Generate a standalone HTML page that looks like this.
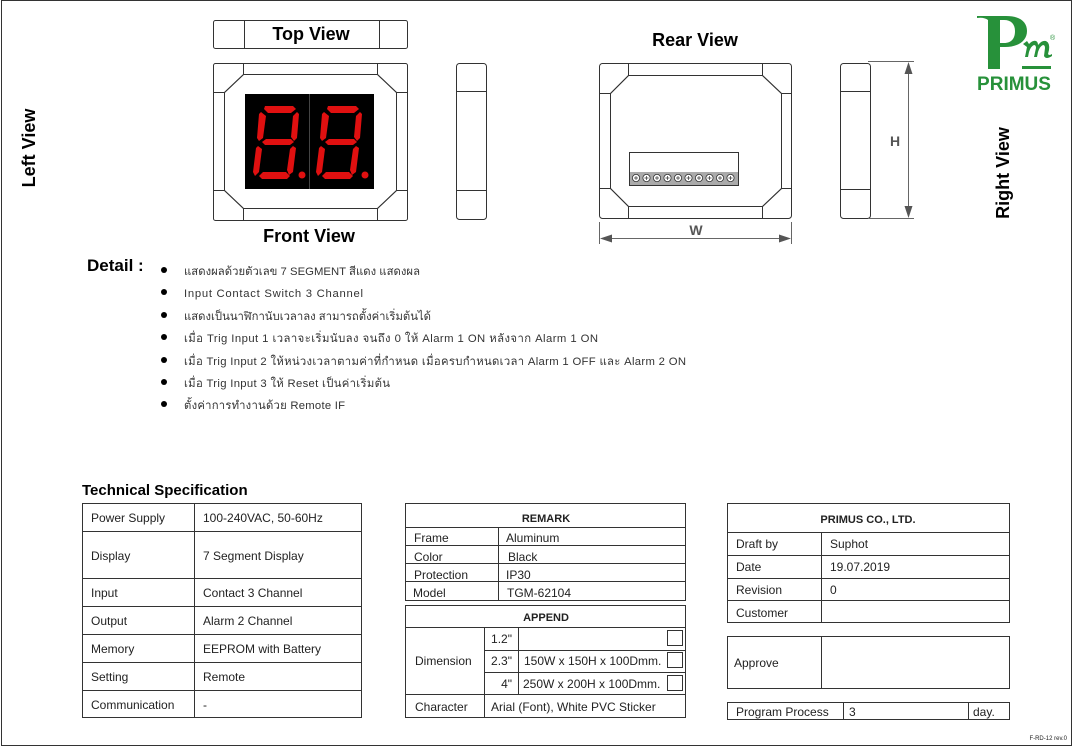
<!DOCTYPE html>
<html><head><meta charset="utf-8"><style>
html,body{margin:0;padding:0;background:#fff;}
svg{display:block;font-family:"Liberation Sans","DejaVu Sans",sans-serif;}
.t{font-size:12px;fill:#222;}
.th{font-family:"Liberation Sans","DejaVu Sans","Noto Sans CJK SC",sans-serif;font-size:11.3px;fill:#333;}
.b{font-weight:bold;fill:#000;}
</style></head><body>
<svg width="1074" height="753" viewBox="0 0 1074 753" xmlns="http://www.w3.org/2000/svg">
<rect x="1.5" y="0.5" width="1070" height="745" fill="none" stroke="#333" stroke-width="1"/>
<g fill="none" stroke="#333" stroke-width="1">
<rect x="213.5" y="20.5" width="194" height="28" rx="2"/>
<line x1="244.5" y1="20" x2="244.5" y2="48"/><line x1="379.5" y1="20" x2="379.5" y2="48"/>
<rect x="213.5" y="63.5" width="194" height="157" rx="2"/>
<polygon points="243.5,74.5 377.5,74.5 396.5,92.5 396.5,190.5 377.5,208.5 243.5,208.5 224.5,190.5 224.5,92.5"/>
<polyline points="243.5,63 243.5,74.5 224.5,92.5 213,92.5"/>
<polyline points="377.5,63 377.5,74.5 396.5,92.5 407,92.5"/>
<polyline points="243.5,220 243.5,208.5 224.5,190.5 213,190.5"/>
<polyline points="377.5,220 377.5,208.5 396.5,190.5 407,190.5"/>
<rect x="456.5" y="63.5" width="30" height="156" rx="3"/>
<line x1="456" y1="91.5" x2="487" y2="91.5"/><line x1="456" y1="190.5" x2="487" y2="190.5"/>
<rect x="599.5" y="63.5" width="192" height="155" rx="3"/>
<polygon points="628.5,75.5 762.5,75.5 781.5,93.5 781.5,188.5 762.5,206.5 628.5,206.5 610.5,188.5 610.5,93.5"/>
<polyline points="628.5,63 628.5,75.5 610.5,93.5 599,93.5"/>
<polyline points="762.5,63 762.5,75.5 781.5,93.5 792,93.5"/>
<polyline points="628.5,219 628.5,206.5 610.5,188.5 599,188.5"/>
<polyline points="762.5,219 762.5,206.5 781.5,188.5 792,188.5"/>
<rect x="629.5" y="152.5" width="109" height="33"/>
<rect x="840.5" y="63.5" width="30" height="155" rx="3"/>
<line x1="840" y1="91.5" x2="871" y2="91.5"/><line x1="840" y1="189.5" x2="871" y2="189.5"/>
</g>
<rect x="630" y="172" width="108" height="13" fill="#aaa"/>
<g fill="#fff" stroke="#333" stroke-width="0.8">
<circle cx="636" cy="178" r="3.6"/><circle cx="646.5" cy="178" r="3.6"/><circle cx="657" cy="178" r="3.6"/><circle cx="667.5" cy="178" r="3.6"/><circle cx="678" cy="178" r="3.6"/><circle cx="688.5" cy="178" r="3.6"/><circle cx="699" cy="178" r="3.6"/><circle cx="709.5" cy="178" r="3.6"/><circle cx="720" cy="178" r="3.6"/><circle cx="730.5" cy="178" r="3.6"/>
</g>
<g stroke="#333" stroke-width="0.7">
<path d="M634,178h4M636,176v4M644.5,178h4M646.5,176v4M655,178h4M657,176v4M665.5,178h4M667.5,176v4M676,178h4M678,176v4M686.5,178h4M688.5,176v4M697,178h4M699,176v4M707.5,178h4M709.5,176v4M718,178h4M720,176v4M728.5,178h4M730.5,176v4"/>
</g>
<g stroke="#666" stroke-width="1" fill="#555">
<line x1="599.5" y1="222" x2="599.5" y2="244"/><line x1="791.5" y1="222" x2="791.5" y2="244"/>
<line x1="602" y1="238.5" x2="789" y2="238.5"/>
<polygon points="600,238.5 612,234.5 612,242.5" stroke="none"/><polygon points="791,238.5 779,234.5 779,242.5" stroke="none"/>
<line x1="868" y1="61.5" x2="914" y2="61.5"/><line x1="868" y1="218.5" x2="914" y2="218.5"/>
<line x1="908.5" y1="64" x2="908.5" y2="216"/>
<polygon points="908.5,62 904.5,74 912.5,74" stroke="none"/><polygon points="908.5,218 904.5,206 912.5,206" stroke="none"/>
</g>
<text x="696" y="235" font-size="14" font-weight="bold" fill="#555" text-anchor="middle">W</text>
<text x="895" y="146" font-size="14" font-weight="bold" fill="#555" text-anchor="middle">H</text>
<rect x="245" y="94" width="129" height="95" fill="#000"/>
<line x1="309.5" y1="94" x2="309.5" y2="189" stroke="#444"/>
<g fill="#e01010">
<g id="d1">
<polygon points="265,106 293,106 296,109 291,113 268,113 264,109"/>
<polygon points="261,112 266,116 263,138 259,141 257,138 259,114"/>
<polygon points="297,112 299,114 297,138 294,141 291,137 293,116"/>
<polygon points="262,142 266,139 291,139 294,142 290,145 265,145"/>
<polygon points="258,146 262,149 259,172 255,176 253,172 256,148"/>
<polygon points="293,146 296,148 293,172 289,175 287,170 290,149"/>
<polygon points="259,176 263,172 286,172 290,176 287,179 262,179"/>
<circle cx="302" cy="175" r="3.5"/>
</g>
<use href="#d1" x="63"/>
</g>
<text x="311" y="40" font-size="18" class="b" text-anchor="middle">Top View</text>
<text x="309" y="242" font-size="18" class="b" text-anchor="middle">Front View</text>
<text x="695" y="46" font-size="18" class="b" text-anchor="middle">Rear View</text>
<text transform="translate(35,148) rotate(-90)" font-size="18" class="b" text-anchor="middle">Left View</text>
<text transform="translate(1009,173) rotate(-90)" font-size="18" class="b" text-anchor="middle">Right View</text>
<!-- logo -->
<g fill="#27913a">
<path d="M977,16 H1006 C1020,16 1027,22 1027,31 C1027,41 1018,47 1005,47 H1000 V69 H988 V20 Q984,17 977,18 Z M1000,20 V43 H1004 C1012,43 1015,38 1015,31 C1015,24 1011,20 1004,20 Z"/>
<path d="M1023,44 L1027,41 L1029,44 Q1033,40 1036,41 Q1038,42 1038,45 Q1042,40 1046,41 Q1050,43 1049,50 L1048,54 Q1049,56 1052,54 L1052,56 Q1046,60 1044,56 L1045,48 Q1045,45 1043,45 Q1040,46 1038,52 L1037,57 L1034,57 L1036,48 Q1036,45 1034,45 Q1031,46 1029,52 L1028,57 L1025,57 L1027,47 Z"/>
<rect x="1022" y="66" width="29" height="3"/>
<text x="1050" y="40" font-size="7" fill="#27913a">®</text>
<text x="1014" y="90" font-size="19" font-weight="bold" fill="#27913a" text-anchor="middle">PRIMUS</text>
</g>
<text x="87" y="271" font-size="17" class="b">Detail :</text>
<g fill="#000"><circle cx="164" cy="270" r="3"/><circle cx="164" cy="292" r="3"/><circle cx="164" cy="315" r="3"/><circle cx="164" cy="337" r="3"/><circle cx="164" cy="360" r="3"/><circle cx="164" cy="382" r="3"/><circle cx="164" cy="404" r="3"/></g>
<g class="th">
<text x="184" y="275" textLength="236">แสดงผลด้วยตัวเลข 7 SEGMENT สีแดง แสดงผล</text>
<text x="184" y="297" textLength="179">Input Contact Switch 3 Channel</text>
<text x="184" y="320" textLength="247">แสดงเป็นนาฬิกานับเวลาลง สามารถตั้งค่าเริ่มต้นได้</text>
<text x="184" y="342" textLength="414">เมื่อ Trig Input 1 เวลาจะเริ่มนับลง จนถึง 0 ให้ Alarm 1 ON หลังจาก Alarm 1 ON</text>
<text x="184" y="365" textLength="502">เมื่อ Trig Input 2 ให้หน่วงเวลาตามค่าที่กำหนด เมื่อครบกำหนดเวลา Alarm 1 OFF และ Alarm 2 ON</text>
<text x="184" y="387" textLength="206">เมื่อ Trig Input 3 ให้ Reset เป็นค่าเริ่มต้น</text>
<text x="184" y="409" textLength="161">ตั้งค่าการทำงานด้วย Remote IF</text>
</g>
<text x="82" y="495" font-size="15" class="b">Technical Specification</text>
<g fill="none" stroke="#333" stroke-width="1">
<rect x="82.5" y="503.5" width="279" height="214"/>
<line x1="194.5" y1="503" x2="194.5" y2="718"/>
<line x1="82" y1="531.5" x2="362" y2="531.5"/><line x1="82" y1="578.5" x2="362" y2="578.5"/><line x1="82" y1="606.5" x2="362" y2="606.5"/><line x1="82" y1="634.5" x2="362" y2="634.5"/><line x1="82" y1="662.5" x2="362" y2="662.5"/><line x1="82" y1="690.5" x2="362" y2="690.5"/>
<rect x="405.5" y="503.5" width="280" height="97"/>
<line x1="405" y1="527.5" x2="686" y2="527.5"/><line x1="405" y1="545.5" x2="686" y2="545.5"/><line x1="405" y1="563.5" x2="686" y2="563.5"/><line x1="405" y1="581.5" x2="686" y2="581.5"/>
<line x1="498.5" y1="527" x2="498.5" y2="600"/>
<rect x="405.5" y="605.5" width="280" height="112"/>
<line x1="405" y1="627.5" x2="686" y2="627.5"/><line x1="484" y1="650.5" x2="686" y2="650.5"/><line x1="484" y1="672.5" x2="686" y2="672.5"/><line x1="405" y1="694.5" x2="686" y2="694.5"/>
<line x1="484.5" y1="627" x2="484.5" y2="718"/><line x1="518.5" y1="627" x2="518.5" y2="694"/>
<rect x="667.5" y="630.5" width="15" height="15"/><rect x="667.5" y="652.5" width="15" height="15"/><rect x="667.5" y="675.5" width="15" height="15"/>
<rect x="727.5" y="503.5" width="282" height="119"/>
<line x1="727" y1="532.5" x2="1010" y2="532.5"/><line x1="727" y1="555.5" x2="1010" y2="555.5"/><line x1="727" y1="578.5" x2="1010" y2="578.5"/><line x1="727" y1="600.5" x2="1010" y2="600.5"/>
<line x1="821.5" y1="532" x2="821.5" y2="623"/>
<rect x="727.5" y="636.5" width="282" height="52"/><line x1="821.5" y1="636" x2="821.5" y2="689"/>
<rect x="727.5" y="702.5" width="282" height="17"/><line x1="843.5" y1="702" x2="843.5" y2="720"/><line x1="968.5" y1="702" x2="968.5" y2="720"/>
</g>
<g class="t">
<text x="91" y="522">Power Supply</text><text x="203" y="522">100-240VAC, 50-60Hz</text>
<text x="91" y="560">Display</text><text x="203" y="560">7 Segment Display</text>
<text x="91" y="597">Input</text><text x="203" y="597">Contact 3 Channel</text>
<text x="91" y="625">Output</text><text x="203" y="625">Alarm 2 Channel</text>
<text x="91" y="653">Memory</text><text x="203" y="653">EEPROM with Battery</text>
<text x="91" y="681">Setting</text><text x="203" y="681">Remote</text>
<text x="91" y="709">Communication</text><text x="203" y="709">-</text>
<text x="546" y="522" font-size="11" font-weight="bold" text-anchor="middle">REMARK</text>
<text x="414" y="542">Frame</text><text x="506" y="542">Aluminum</text>
<text x="414" y="561">Color</text><text x="508" y="561">Black</text>
<text x="414" y="579">Protection</text><text x="506" y="579">IP30</text>
<text x="413" y="597">Model</text><text x="507" y="597">TGM-62104</text>
<text x="546" y="621" font-size="11" font-weight="bold" text-anchor="middle">APPEND</text>
<text x="415" y="665">Dimension</text>
<text x="512" y="643" text-anchor="end">1.2"</text><text x="512" y="665" text-anchor="end">2.3"</text><text x="512" y="688" text-anchor="end">4"</text>
<text x="524" y="665">150W x 150H x 100Dmm.</text><text x="523" y="688">250W x 200H x 100Dmm.</text>
<text x="415" y="711">Character</text><text x="491" y="711">Arial (Font), White PVC Sticker</text>
<text x="868" y="523" font-size="11" font-weight="bold" text-anchor="middle">PRIMUS CO., LTD.</text>
<text x="736" y="548">Draft by</text><text x="830" y="548">Suphot</text>
<text x="736" y="571">Date</text><text x="830" y="571">19.07.2019</text>
<text x="736" y="594">Revision</text><text x="830" y="594">0</text>
<text x="736" y="617">Customer</text>
<text x="734" y="667">Approve</text>
<text x="736" y="716">Program Process</text><text x="849" y="716">3</text><text x="973" y="716">day.</text>
</g>
<text x="1067" y="740" font-size="6" fill="#222" text-anchor="end">F-RD-12 rev.0</text>
</svg>
</body></html>
